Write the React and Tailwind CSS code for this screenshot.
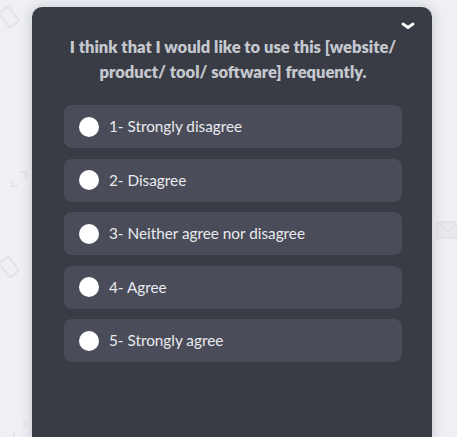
import React from "react";

const options = [
  "1- Strongly disagree",
  "2- Disagree",
  "3- Neither agree nor disagree",
  "4- Agree",
  "5- Strongly agree",
];

export default function App() {
  return (
    <div
      className="relative w-[457px] h-[437px] overflow-hidden bg-[#eff0f4]"
      style={{ fontFamily: "Lato, 'Open Sans', sans-serif" }}
    >
      {/* faint background decorations */}
      <svg className="absolute left-0 top-[2px]" width="26" height="30" viewBox="0 0 26 30" fill="none" stroke="#e2e3e6" strokeWidth="2">
        <rect x="3" y="6" width="12" height="18" rx="2" transform="rotate(-40 9 15)" />
      </svg>
      <svg className="absolute left-[8px] top-[168px]" width="22" height="22" viewBox="0 0 22 22" fill="none" stroke="#e4e5e8" strokeWidth="2">
        <path d="M4 12 v6 h6 M18 10 V4 h-6" />
      </svg>
      <svg className="absolute left-0 top-[252px]" width="26" height="30" viewBox="0 0 26 30" fill="none" stroke="#e2e3e6" strokeWidth="2">
        <rect x="3" y="6" width="12" height="18" rx="2" transform="rotate(-40 9 15)" />
      </svg>
      <svg className="absolute left-[10px] top-[420px]" width="22" height="22" viewBox="0 0 22 22" fill="none" stroke="#e4e5e8" strokeWidth="2">
        <path d="M4 12 v6 h6 M18 4 h-6" />
      </svg>
      <svg className="absolute left-[436px] top-[220px]" width="24" height="20" viewBox="0 0 24 20" fill="#e8e9ec" stroke="#e0e1e4" strokeWidth="1.5">
        <rect x="1" y="2" width="22" height="16" rx="1" />
        <path d="M1 3 l11 8 l11 -8" fill="none" />
      </svg>

      <div className="relative ml-[32px] mt-[7px] w-[400px] h-[440px] rounded-t-[10px] bg-[#393c45] shadow-[0_0_12px_rgba(60,65,90,0.25)] pt-[28px] pl-[32px] pr-[30px]">
        <svg className="absolute right-[17px] top-[14px]" width="14" height="10" viewBox="0 0 14 10" fill="none" stroke="#ffffff" strokeWidth="2.8" strokeLinecap="round" strokeLinejoin="round">
          <path d="M2 3 L7 6.5 L12 3" />
        </svg>
        <div className="text-center text-[16.5px] leading-[25px] font-extrabold text-[#c6c8cf] px-[2px]">
          I think that I would like to use this [website/ product/ tool/ software] frequently.
        </div>
        <div className="mt-[20px] flex flex-col gap-[10.5px]">
          {options.map((o) => (
            <div
              key={o}
              className="h-[43px] rounded-[8px] bg-[#4a4d59] flex items-center pl-[15px]"
            >
              <span className="w-[20px] h-[20px] rounded-full bg-white shrink-0" />
              <span className="ml-[10px] text-[15.3px] text-[#e9eaee]">{o}</span>
            </div>
          ))}
        </div>
      </div>
    </div>
  );
}
